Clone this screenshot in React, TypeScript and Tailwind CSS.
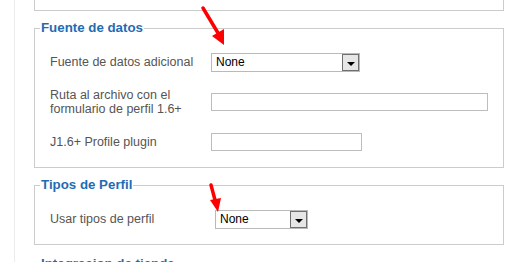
import React from 'react';

const font = { fontFamily: '"Liberation Sans", Arial, sans-serif' };

function Select({ width }: { width: string }) {
  return (
    <div className={`${width} h-[19px] border border-[#b9b9b9] bg-white flex items-stretch`}>
      <span className="flex-1 pl-[4px] text-[12px] leading-[17px] text-black">None</span>
      <span className="w-[17px] border border-[#6f6f6f] bg-[#e6e6e6] flex items-end justify-center pb-[4px]">
        <span className="w-0 h-0 border-l-[4px] border-r-[4px] border-t-[4px] border-l-transparent border-r-transparent border-t-black" />
      </span>
    </div>
  );
}

function Legend({ children }: { children: React.ReactNode }) {
  return (
    <legend className="ml-[5px] px-[1px] text-[13.3px] leading-[16px] font-bold text-[#1f6cb4]">{children}</legend>
  );
}

export default function App() {
  return (
    <div className="relative w-[510px] h-[262px] overflow-hidden bg-white" style={font}>
      <div className="pl-[14px] h-full">
        <div className="h-full border-l border-[#ececec] pl-[19px]">
          <div className="w-[470px] h-[11px] border border-t-0 border-[#cccccc]" />

          <fieldset className="w-[470px] mt-[9px] border border-[#cccccc] p-0 pt-[17px] pb-[16px]">
            <Legend>Fuente de datos</Legend>
            <div className="flex items-center h-[19px] pl-[15px]">
              <span className="w-[161px] text-[12.5px] text-[#555]">Fuente de datos adicional</span>
              <Select width="w-[149px]" />
            </div>
            <div className="flex items-center h-[30px] mt-[15px] pl-[15px]">
              <span className="w-[161px] text-[12.5px] leading-[14px] text-[#555]">
                Ruta al archivo con el<br />formulario de perfil 1.6+
              </span>
              <div className="w-[277px] h-[18px] border border-[#bdbdbd] bg-white" />
            </div>
            <div className="flex items-center h-[18px] mt-[16px] pl-[15px]">
              <span className="w-[161px] text-[12.5px] text-[#555]">J1.6+ Profile plugin</span>
              <div className="w-[151px] h-[18px] border border-[#bdbdbd] bg-white" />
            </div>
          </fieldset>

          <fieldset className="w-[470px] mt-[9px] border border-[#cccccc] p-0 pt-[17px] pb-[15px]">
            <Legend>Tipos de Perfil</Legend>
            <div className="flex items-center h-[19px] pl-[15px]">
              <span className="w-[165px] text-[12.5px] text-[#555]">Usar tipos de perfil</span>
              <Select width="w-[93px]" />
            </div>
          </fieldset>

          <fieldset className="w-[470px] mt-[11px] border border-[#cccccc] p-0 pt-[17px] pb-[15px]">
            <Legend>Integracion de tienda</Legend>
            <div className="h-[19px]" />
          </fieldset>
        </div>
      </div>

      <svg className="absolute left-0 top-0 pointer-events-none" width="510" height="262">
        <line x1="203" y1="8" x2="218" y2="33" stroke="#f00" strokeWidth="3.5" strokeLinecap="round" />
        <polygon points="224,45 212,36 224,29" fill="#f00" />
        <line x1="211" y1="185" x2="215" y2="200" stroke="#f00" strokeWidth="3.5" strokeLinecap="round" />
        <polygon points="218,212 210,200 221,198" fill="#f00" />
      </svg>
    </div>
  );
}
